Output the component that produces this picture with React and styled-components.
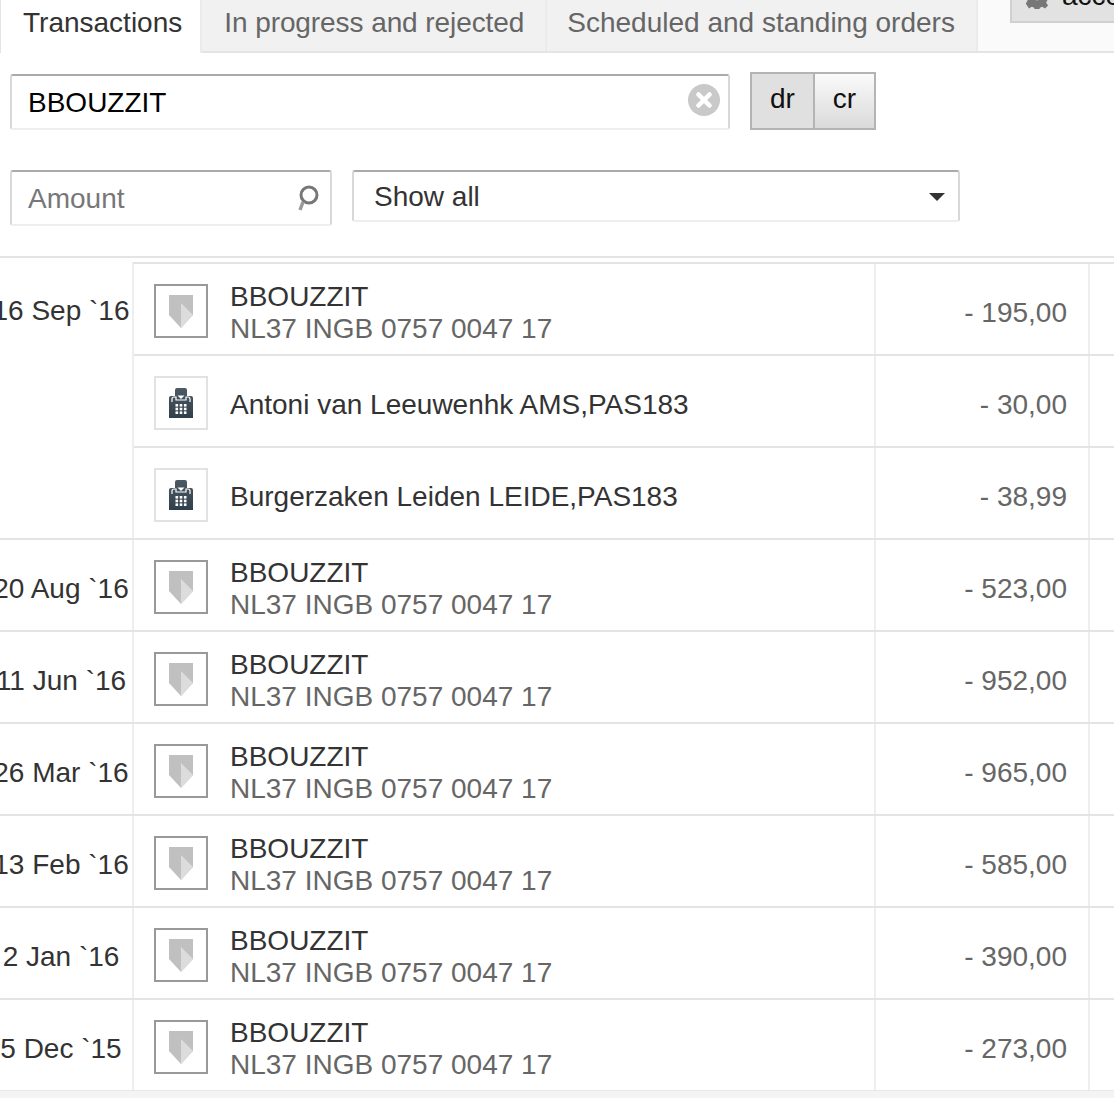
import React from "react";
import styled, { createGlobalStyle } from "styled-components";
import { X } from "lucide-react";

const GlobalStyle = createGlobalStyle`
  html, body {
    margin: 0;
    background: #fff;
  }
  body {
    font-family: "Liberation Sans", Arial, sans-serif;
    font-size: 28px;
    color: #333;
  }
`;

const Page = styled.div`
  width: 1114px;
  height: 1098px;
  overflow: hidden;
  background: #fff;
  display: flex;
  flex-direction: column;
`;

const TabBar = styled.div`
  display: flex;
  align-items: flex-start;
  height: 53px;
  flex: none;
  background: #fafafa;
  border-bottom: 2px solid #e4e4e4;
  box-sizing: border-box;
`;

const Tab = styled.div`
  height: ${(p) => (p.$active ? "53px" : "51px")};
  box-sizing: border-box;
  padding: ${(p) => p.$padding};
  line-height: 36px;
  white-space: nowrap;
  letter-spacing: ${(p) => p.$tracking || "normal"};
  background: ${(p) => (p.$active ? "#fff" : "#f1f1f1")};
  color: ${(p) => (p.$active ? "#333" : "#666")};
  border-right: 2px solid #ebebeb;
  border-left: ${(p) => (p.$active ? "1px solid #e4e4e4" : "none")};
`;

const AccountButton = styled.div`
  margin: -19px 0 0 32px;
  height: 42px;
  flex: none;
  display: flex;
  align-items: center;
  gap: 12px;
  padding: 0 0 12px 12px;
  white-space: nowrap;
  color: #111;
  background: #e2e2e2;
  border: 2px solid #d0d0d0;
  box-sizing: border-box;
`;

const SearchRow = styled.div`
  display: flex;
  align-items: flex-start;
  gap: 20px;
  padding: 21px 0 0 10px;
`;

const Field = styled.div`
  position: relative;
  flex: none;
  width: ${(p) => p.$width}px;
  height: ${(p) => p.$height}px;
  box-sizing: border-box;
  display: flex;
  align-items: center;
  justify-content: space-between;
  padding: ${(p) => p.$padding || "2px 16px 0"};
  background: #fff;
  border-radius: 3px;
  border-style: solid;
  border-width: 2px;
  border-color: #ababab #d8d8d8 #eeeeee #d8d8d8;
`;

const Value = styled.span`
  color: ${(p) => p.$color || "#000"};
`;

const ClearIcon = styled.span`
  position: absolute;
  right: 8px;
  top: 8px;
  width: 32px;
  height: 32px;
  border-radius: 50%;
  background: #c9c9c9;
  display: flex;
  align-items: center;
  justify-content: center;
  color: #fff;
`;

const Toggle = styled.div`
  display: flex;
  margin-top: -2px;
  height: 58px;
  box-sizing: border-box;
  border: 2px solid #b4b4b4;
`;

const ToggleItem = styled.div`
  width: ${(p) => p.$width}px;
  display: flex;
  align-items: center;
  justify-content: center;
  padding-bottom: 5px;
  box-sizing: border-box;
  color: #111;
  background: ${(p) => (p.$on ? "#e0e0e0" : "linear-gradient(#fafafa, #dadada)")};
  border-right: ${(p) => (p.$divider ? "2px solid #b4b4b4" : "none")};
`;

const FilterRow = styled.div`
  display: flex;
  align-items: flex-start;
  gap: 20px;
  padding: 40px 0 0 10px;
`;

const Caret = styled.span`
  width: 0;
  height: 0;
  border-left: 8px solid transparent;
  border-right: 8px solid transparent;
  border-top: 8px solid #333;
`;

const Rule = styled.div`
  margin-top: 30px;
  height: 2px;
  flex: none;
  background: #e4e4e4;
`;

const Table = styled.div`
  margin-top: 4px;
`;

const Group = styled.div`
  display: grid;
  grid-template-columns: 132px 1fr;
  border-top: 2px solid ${(p) => (p.$first ? "transparent" : "#e4e4e4")};
`;

const DateCell = styled.div`
  height: 90px;
  padding: ${(p) => (p.$first ? "4px" : "8px")} 10px 0 0;
  box-sizing: border-box;
  display: flex;
  align-items: center;
  justify-content: center;
  white-space: nowrap;
`;

const Rows = styled.div`
  border-left: 2px solid #eeeeee;
  ${(p) => p.$first && "margin-top: -2px; border-top: 2px solid #e4e4e4;"}
`;

const Row = styled.div`
  height: 90px;
  display: grid;
  grid-template-columns: 742px 214px 1fr;
  border-top: ${(p) => (p.$divider ? "2px solid #e4e4e4" : "none")};
`;

const Description = styled.div`
  display: flex;
  align-items: center;
  gap: 22px;
  padding: 4px 0 0 20px;
  border-right: 2px solid #eeeeee;
`;

const IconBox = styled.div`
  width: 54px;
  height: 54px;
  flex: none;
  box-sizing: border-box;
  display: flex;
  align-items: center;
  justify-content: center;
  border: 2px solid ${(p) => (p.$dark ? "#999" : "#e2e2e2")};
`;

const Lines = styled.div`
  margin-top: 4px;
  line-height: 32px;
  white-space: nowrap;
`;

const Account = styled.div`
  color: #666;
`;

const Amount = styled.div`
  display: flex;
  align-items: center;
  justify-content: flex-end;
  padding: 8px 21px 0 0;
  color: #666;
  border-right: 2px solid #eeeeee;
`;

const Footer = styled.div`
  flex: 1;
  background: #f4f4f4;
  border-top: 1px solid #e8e8e8;
`;

const ShieldIcon = () => (
  <svg width="24" height="33" viewBox="0 0 24 33" style={{ filter: "blur(0.7px)" }}>
    <path d="M0 0h24v20L12 33 0 20z" fill="#c0c0c0" />
    <path d="M12 8l12 12-12 13z" fill="#dcdcdc" />
  </svg>
);

const TerminalIcon = () => (
  <svg width="24" height="30" viewBox="0 0 24 30">
    <defs>
      <linearGradient id="terminalFill" x1="0" y1="0" x2="0" y2="1">
        <stop offset="0" stopColor="#4b5a65" />
        <stop offset="1" stopColor="#303f4a" />
      </linearGradient>
    </defs>
    <path d="M6 2a2 2 0 0 1 2-2h8a2 2 0 0 1 2 2v6h4a2 2 0 0 1 2 2v20H0V10a2 2 0 0 1 2-2h4z" fill="url(#terminalFill)" />
    <path d="M3 14V11a2 2 0 0 1 2-2h2v3h10V9h2a2 2 0 0 1 2 2v3" fill="none" stroke="#fff" strokeWidth="1.200" />
    <path d="M8.500 7.500h7L12 11z" fill="#fff" />
    <g fill="#fff">
      {[16, 19.7, 23.4].map((y) =>
        [6.5, 10.7, 14.9].map((x) => <rect key={`${x}-${y}`} x={x} y={y} width="2.600" height="2.600" />)
      )}
    </g>
  </svg>
);

const SearchIcon = () => (
  <svg width="22" height="28" viewBox="0 0 22 28">
    <circle cx="12" cy="10" r="8" fill="none" stroke="#777" strokeWidth="3" />
    <path d="M6 17l-3 8" stroke="#999" strokeWidth="3.500" fill="none" />
  </svg>
);

const GearIcon = () => (
  <svg width="26" height="26" viewBox="0 0 24 24" fill="#777">
    <path d="M10 1h4l.6 3 2.200.9 2.600-1.700 2.800 2.800-1.700 2.600.9 2.200 3 .6v4l-3 .6-.9 2.200 1.700 2.600-2.800 2.800-2.600-1.700-2.200.9-.6 3h-4l-.6-3-2.200-.9-2.600 1.700L1.600 19l1.700-2.600-.9-2.200-3-.6v-4l3-.6.9-2.200L1.600 4.200 4.400 1.400 7 3.100l2.400-.9zM12 8a4 4 0 1 0 0 8 4 4 0 0 0 0-8z" />
  </svg>
);

const iban = "NL37 INGB 0757 0047 17";

const groups = [
  {
    date: "16 Sep `16",
    rows: [
      { name: "BBOUZZIT", account: iban, amount: "- 195,00" },
      { name: "Antoni van Leeuwenhk AMS,PAS183", amount: "- 30,00" },
      { name: "Burgerzaken Leiden LEIDE,PAS183", amount: "- 38,99" },
    ],
  },
  { date: "20 Aug `16", rows: [{ name: "BBOUZZIT", account: iban, amount: "- 523,00" }] },
  { date: "11 Jun `16", rows: [{ name: "BBOUZZIT", account: iban, amount: "- 952,00" }] },
  { date: "26 Mar `16", rows: [{ name: "BBOUZZIT", account: iban, amount: "- 965,00" }] },
  { date: "13 Feb `16", rows: [{ name: "BBOUZZIT", account: iban, amount: "- 585,00" }] },
  { date: "2 Jan `16", rows: [{ name: "BBOUZZIT", account: iban, amount: "- 390,00" }] },
  { date: "5 Dec `15", rows: [{ name: "BBOUZZIT", account: iban, amount: "- 273,00" }] },
];

export default function App() {
  return (
    <Page>
      <GlobalStyle />
      <TabBar>
        <Tab $active $padding="5px 18px 0 22px">Transactions</Tab>
        <Tab $padding="5px 21px 0 22px" $tracking="-0.08px">In progress and rejected</Tab>
        <Tab $padding="5px 21px 0 20px">Scheduled and standing orders</Tab>
        <AccountButton>
          <GearIcon />
          accounts
        </AccountButton>
      </TabBar>

      <SearchRow>
        <Field $width={720} $height={56}>
          <Value>BBOUZZIT</Value>
          <ClearIcon>
            <X size={22} strokeWidth={5} />
          </ClearIcon>
        </Field>
        <Toggle>
          <ToggleItem $on $width={63} $divider>dr</ToggleItem>
          <ToggleItem $width={59}>cr</ToggleItem>
        </Toggle>
      </SearchRow>

      <FilterRow>
        <Field $width={322} $height={56} $padding="2px 11px 0 16px">
          <Value $color="#777">Amount</Value>
          <SearchIcon />
        </Field>
        <Field $width={608} $height={52} $padding="2px 13px 0 20px">
          <Value $color="#333">Show all</Value>
          <Caret />
        </Field>
      </FilterRow>

      <Rule />
      <Table>
        {groups.map((group, g) => (
          <Group key={group.date} $first={g === 0}>
            <DateCell $first={g === 0}>{group.date}</DateCell>
            <Rows $first={g === 0}>
              {group.rows.map((row, r) => (
                <Row key={row.name} $divider={r > 0}>
                  <Description>
                    <IconBox $dark={!!row.account}>
                      {row.account ? <ShieldIcon /> : <TerminalIcon />}
                    </IconBox>
                    <Lines>
                      <div>{row.name}</div>
                      {row.account && <Account>{row.account}</Account>}
                    </Lines>
                  </Description>
                  <Amount>{row.amount}</Amount>
                </Row>
              ))}
            </Rows>
          </Group>
        ))}
      </Table>
      <Footer />
    </Page>
  );
}
